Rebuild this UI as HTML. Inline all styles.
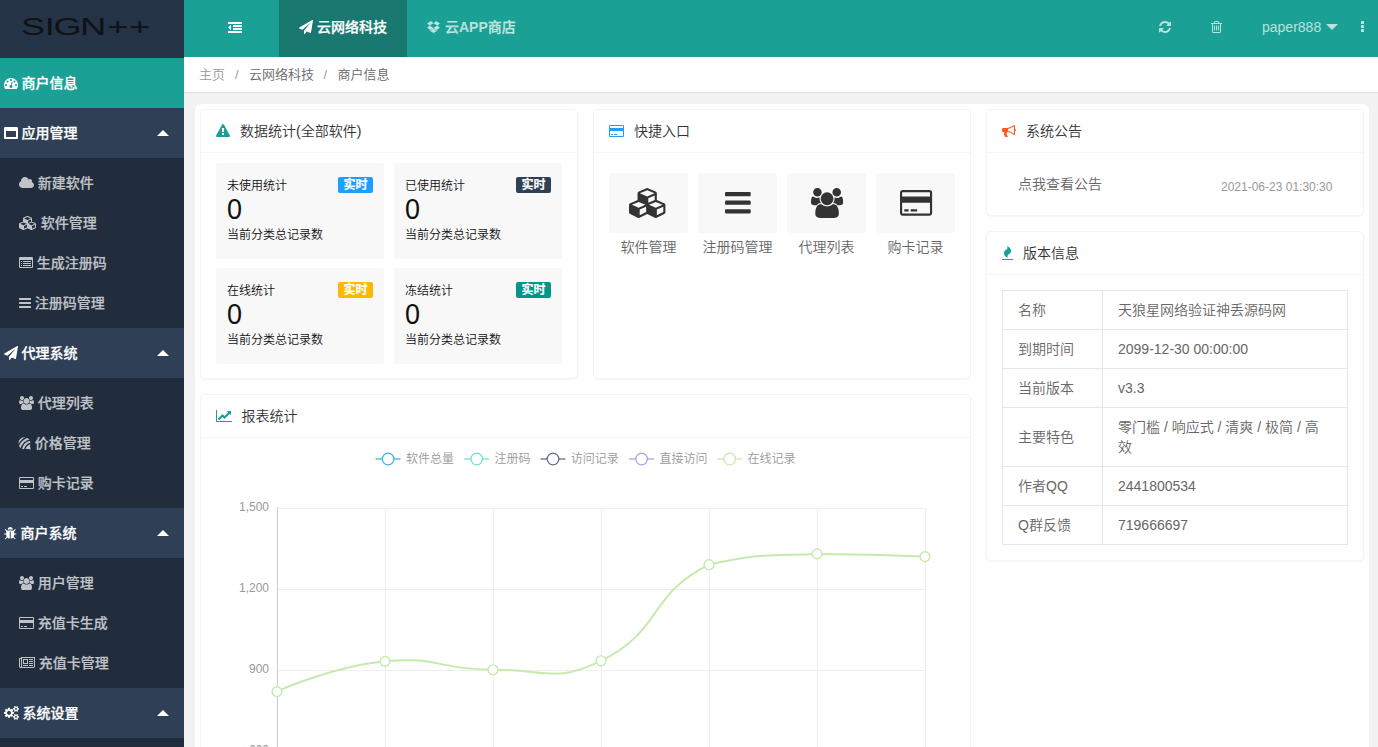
<!DOCTYPE html>
<html lang="zh-CN">
<head>
<meta charset="utf-8">
<title>云网络科技</title>
<style>
*{box-sizing:border-box;margin:0;padding:0}
html,body{width:1378px;height:747px;overflow:hidden;background:#f2f2f2;
  font-family:"Liberation Sans","Noto Sans CJK SC",sans-serif;font-size:14px;color:#333;font-weight:350}
i{font-style:normal;display:block}
b{font-weight:bold;-webkit-text-stroke:0}
svg{display:block;overflow:visible}
.abs{position:absolute;white-space:nowrap}
#page{position:relative;width:1378px;height:747px;overflow:hidden}
/* sidebar */
#side{position:absolute;left:0;top:0;width:184px;height:747px;background:#2f4056;overflow:hidden}
#logo{position:absolute;left:0;top:0;width:184px;height:57.6px;background:#243346}
#logo .lg{position:absolute;left:0;top:0;font-size:24px;color:#101114;white-space:nowrap}
#logo .lg span{position:absolute;line-height:30px;transform-origin:0 0}
.mi{position:absolute;left:0;width:184px;height:50px;background:#2f4056;color:#fff;font-weight:500;-webkit-text-stroke:.25px #fff;font-size:14px;line-height:50px}
.mi.on{background:#1aa094}
.mi .t{position:absolute;top:0;white-space:nowrap}
.mi .ar{position:absolute;left:157px;top:22px;width:0;height:0;border-left:6px solid transparent;border-right:6px solid transparent;border-bottom:6px solid #fff}
.sub{position:absolute;left:0;width:184px;background:#212d3c}
.si{position:absolute;left:0;width:184px;height:40px;line-height:40px;color:#c0c3c8;-webkit-text-stroke:.2px #c0c3c8;font-weight:500;font-size:14px}
.si .t{position:absolute;top:0;white-space:nowrap}
/* header */
#hd{position:absolute;left:184px;top:0;width:1194px;height:57px;background:#1aa094;color:#fff}
#hd .tab{position:absolute;top:0;height:57px}
#hd .tab.on{background:#197971}
#hd .ht{position:absolute;top:7px;line-height:40px;font-weight:500;-webkit-text-stroke:.25px;font-size:14px;white-space:nowrap}
#hd .hu{position:absolute;top:7px;line-height:40px;font-size:14px;white-space:nowrap}
#crumb{position:absolute;left:184px;top:57px;width:1194px;height:36px;background:#fff;border-bottom:1px solid #e2dddd;font-size:13px;line-height:36.2px;color:#666}
/* content */
#wrap{position:absolute;left:195px;top:104px;width:1174px;height:700px;background:#fff;border-radius:6px}
.card{position:absolute;background:#fff;border:1px solid #f4f4f4;border-radius:5px;box-shadow:0 1px 2px 0 rgba(0,0,0,.04)}
.card .ch{position:absolute;left:0;top:0;right:0;height:43px;border-bottom:1px solid #f6f6f6;line-height:43px;font-size:14px;color:#333;font-weight:350}
.card .ch .t{position:absolute;top:0;white-space:nowrap}
.st{position:absolute;width:168px;height:96px;background:#f8f8f8;border-radius:2px}
.st .s1{position:absolute;left:11px;top:14.3px;font-size:12px;line-height:18px;color:#111;white-space:nowrap}
.st .bd{position:absolute;left:122px;top:14px;width:35px;height:16px;border-radius:2px;color:#fff;font-size:12px;font-weight:bold;-webkit-text-stroke:.2px #fff;line-height:16px;text-align:center}
.st .s2{position:absolute;left:11.2px;top:30.2px;font-size:29px;transform-origin:0 50%;transform:scaleX(.93);line-height:32px;color:#111}
.st .s3{position:absolute;left:11px;top:63.3px;font-size:12px;line-height:18px;color:#111;white-space:nowrap}
.qb{position:absolute;width:79px;height:60px;background:#f8f8f8;border-radius:2px}
.ql{position:absolute;text-align:center;font-size:14px;line-height:20px;color:#666;white-space:nowrap}
.tb{position:absolute;border-collapse:collapse;width:346px;font-size:14px;color:#666}
.tb td{border:1px solid #e6e6e6;padding:9px 15px;line-height:20px;height:39px}
.tb .c1{width:100px}
</style>
</head>
<body>
<div id="page">
<div id="side">
<div id="logo"><svg class="abs" style="left:0;top:0" width="184" height="57" viewBox="0 0 184 57"><text transform="scale(1.5,1.02)" x="14.03 29.87 35.73 53.53 71.57 86.23" y="34.7" font-family="Liberation Sans, sans-serif" font-size="24" font-weight="400" fill="#101114">SIGN++</text></svg></div>
<div class="mi on" style="top:58px"><svg class="abs" style="left:3.60px;top:20.00px;" width="14.00" height="11.00" viewBox="0 256 1792 1408" fill="#fff"><path d="M384 1152q0-53-37.500-90.500t-90.500-37.500-90.500 37.500-37.500 90.500 37.500 90.500 90.500 37.500 90.500-37.500 37.500-90.500zm192-448q0-53-37.500-90.500t-90.500-37.500-90.500 37.500-37.500 90.500 37.500 90.500 90.500 37.500 90.500-37.500 37.500-90.500zm428 481l101-382q6-26-7.500-48.500t-38.500-29.500-48 6.500-30 39.500l-101 382q-60 5-107 43.500t-63 98.500q-20 77 20 146t117 89 146-20 89-117q16-60-6-117t-72-91zm660-33q0-53-37.500-90.500t-90.500-37.500-90.500 37.500-37.500 90.500 37.500 90.500 90.500 37.500 90.500-37.500 37.500-90.500zm-640-640q0-53-37.500-90.500t-90.500-37.500-90.500 37.500-37.500 90.500 37.500 90.500 90.500 37.500 90.500-37.500 37.500-90.500zm448 192q0-53-37.500-90.500t-90.500-37.500-90.500 37.500-37.500 90.500 37.500 90.500 90.500 37.500 90.500-37.500 37.500-90.500zm320 448q0 261-141 483-19 29-54 29h-1402q-35 0-54-29-141-221-141-483 0-182 71-348t191-286 286-191 348-71 348 71 286 191 191 286 71 348z"/></svg><span class="t" style="left:21.6px">商户信息</span></div>
<div class="mi" style="top:108px"><svg class="abs" style="left:3.60px;top:19.00px;" width="14.00" height="12.00" viewBox="0 128 1792 1536" fill="#fff"><path d="M256 1408h1280v-768h-1280v768zm1536-1120v1216q0 66-47 113t-113 47h-1472q-66 0-113-47t-47-113v-1216q0-66 47-113t113-47h1472q66 0 113 47t47 113z"/></svg><span class="t" style="left:21.6px">应用管理</span><i class="ar"></i></div>
<div class="sub" style="top:158px;height:170px"></div>
<div class="si" style="top:163px"><svg class="abs" style="left:18.70px;top:14.00px;" width="15.00" height="11.00" viewBox="64 128 1920 1408" fill="#c0c3c8"><path d="M1984 1152q0 159-112.500 271.500t-271.500 112.500h-1088q-185 0-316.500-131.500t-131.500-316.500q0-132 71-241.500t187-163.500q-2-28-2-43 0-212 150-362t362-150q158 0 286.500 88t187.500 230q70-62 166-62 106 0 181 75t75 181q0 75-41 138 129 30 213 134.500t84 239.500z"/></svg><span class="t" style="left:37.7px">新建软件</span></div>
<div class="si" style="top:203px"><svg class="abs" style="left:18.70px;top:12.98px;" width="17.00" height="14.00" viewBox="256 -3 2176 1792" fill="#c0c3c8"><path d="M896 1629l384-192v-314l-384 164v342zm-64-454l404-173-404-173-404 173zm1088 454l384-192v-314l-384 164v342zm-64-454l404-173-404-173-404 173zm-448-293l384-165v-266l-384 164v267zm-64-379l441-189-441-189-441 189zm1088 518v416q0 36-19 67t-52 47l-448 224q-25 14-57 14t-57-14l-448-224q-4-2-7-4-2 2-7 4l-448 224q-25 14-57 14t-57-14l-448-224q-33-16-52-47t-19-67v-416q0-38 21.500-70t56.500-48l434-186v-400q0-38 21.500-70t56.500-48l448-192q23-10 50-10t50 10l448 192q35 16 56.500 48t21.500 70v400l434 186q36 16 57 48t21 70z"/></svg><span class="t" style="left:40.7px">软件管理</span></div>
<div class="si" style="top:243px"><svg class="abs" style="left:18.70px;top:14.00px;" width="14.00" height="11.00" viewBox="0 128 1792 1408" fill="#c0c3c8"><path d="M384 1184v64q0 13-9.500 22.500t-22.500 9.500h-64q-13 0-22.500-9.500t-9.500-22.500v-64q0-13 9.500-22.500t22.500-9.500h64q13 0 22.500 9.500t9.500 22.500zm0-256v64q0 13-9.500 22.500t-22.500 9.500h-64q-13 0-22.500-9.500t-9.500-22.500v-64q0-13 9.500-22.500t22.500-9.500h64q13 0 22.500 9.500t9.500 22.500zm0-256v64q0 13-9.500 22.500t-22.500 9.500h-64q-13 0-22.500-9.500t-9.500-22.500v-64q0-13 9.500-22.500t22.500-9.500h64q13 0 22.500 9.500t9.500 22.500zm1152 512v64q0 13-9.500 22.500t-22.500 9.500h-960q-13 0-22.500-9.500t-9.500-22.500v-64q0-13 9.500-22.500t22.500-9.500h960q13 0 22.500 9.500t9.500 22.500zm0-256v64q0 13-9.500 22.500t-22.500 9.500h-960q-13 0-22.500-9.500t-9.500-22.500v-64q0-13 9.500-22.500t22.500-9.500h960q13 0 22.500 9.500t9.500 22.500zm0-256v64q0 13-9.500 22.500t-22.500 9.500h-960q-13 0-22.500-9.500t-9.500-22.500v-64q0-13 9.500-22.500t22.500-9.500h960q13 0 22.500 9.500t9.500 22.500zm128 704v-832q0-13-9.500-22.500t-22.500-9.500h-1472q-13 0-22.500 9.500t-9.500 22.500v832q0 13 9.500 22.500t22.500 9.500h1472q13 0 22.500-9.500t9.500-22.500zm128-1088v1088q0 66-47 113t-113 47h-1472q-66 0-113-47t-47-113v-1088q0-66 47-113t113-47h1472q66 0 113 47t47 113z"/></svg><span class="t" style="left:36.7px">生成注册码</span></div>
<div class="si" style="top:283px"><svg class="abs" style="left:18.70px;top:15.00px;" width="12.00" height="10.00" viewBox="128 256 1536 1280" fill="#c0c3c8"><path d="M1664 1344v128q0 26-19 45t-45 19h-1408q-26 0-45-19t-19-45v-128q0-26 19-45t45-19h1408q26 0 45 19t19 45zm0-512v128q0 26-19 45t-45 19h-1408q-26 0-45-19t-19-45v-128q0-26 19-45t45-19h1408q26 0 45 19t19 45zm0-512v128q0 26-19 45t-45 19h-1408q-26 0-45-19t-19-45v-128q0-26 19-45t45-19h1408q26 0 45 19t19 45z"/></svg><span class="t" style="left:34.7px">注册码管理</span></div>
<div class="mi" style="top:328px"><svg class="abs" style="left:3.60px;top:18.00px;" width="14.00" height="14.00" viewBox="-0 0 1792 1792" fill="#fff"><path d="M1764 11q33 24 27 64l-256 1536q-5 29-32 45-14 8-31 8-11 0-24-5l-453-185-242 295q-18 23-49 23-13 0-22-4-19-7-30.500-23.500t-11.500-36.500v-349l864-1059-1069 925-395-162q-37-14-40-55-2-40 32-59l1664-960q15-9 32-9 20 0 36 11z"/></svg><span class="t" style="left:21.6px">代理系统</span><i class="ar"></i></div>
<div class="sub" style="top:378px;height:130px"></div>
<div class="si" style="top:383px"><svg class="abs" style="left:18.70px;top:13.00px;" width="15.00" height="14.00" viewBox="0 0 1920 1792" fill="#c0c3c8"><path d="M593 896q-162 5-265 128h-134q-82 0-138-40.500t-56-118.500q0-353 124-353 6 0 43.500 21t97.500 42.500 119 21.500q67 0 133-23-5 37-5 66 0 139 81 256zm1071 637q0 120-73 189.500t-194 69.500h-874q-121 0-194-69.500t-73-189.500q0-53 3.500-103.500t14-109 26.500-108.500 43-97.500 62-81 85.500-53.500 111.500-20q10 0 43 21.500t73 48 107 48 135 21.500 135-21.500 107-48 73-48 43-21.500q61 0 111.500 20t85.500 53.500 62 81 43 97.500 26.500 108.500 14 109 3.500 103.500zm-1024-1277q0 106-75 181t-181 75-181-75-75-181 75-181 181-75 181 75 75 181zm704 384q0 159-112.500 271.500t-271.500 112.500-271.500-112.500-112.500-271.500 112.500-271.500 271.500-112.500 271.500 112.500 112.500 271.500zm576 225q0 78-56 118.500t-138 40.500h-134q-103-123-265-128 81-117 81-256 0-29-5-66 66 23 133 23 59 0 119-21.500t97.500-42.500 43.500-21q124 0 124 353zm-128-609q0 106-75 181t-181 75-181-75-75-181 75-181 181-75 181 75 75 181z"/></svg><span class="t" style="left:37.7px">代理列表</span></div>
<div class="si" style="top:423px"><svg class="abs" style="left:18.40px;top:13.90px;color:#c0c3c8" width="13" height="12.4" viewBox="0 0 12 12" fill="#c0c3c8"><defs><clipPath id="fbc"><path d="M6 0.2a5.9 5.9 0 0 1 5.9 5.9c0 1.5-.55 2.9-1.5 3.9L12 12l-3.6-.55A5.9 5.9 0 1 1 6 .2z"/></clipPath></defs><g clip-path="url(#fbc)" stroke-width="2.05" fill="none" stroke="currentColor"><circle cx="14" cy="14" r="16.6"/><circle cx="14" cy="14" r="13.2"/><circle cx="14" cy="14" r="9.8"/><circle cx="14" cy="14" r="6.4"/></g><path d="M8.3 11.3L12 12 11.2 8.2 9.4 9.2z" fill="currentColor"/></svg><span class="t" style="left:34.7px">价格管理</span></div>
<div class="si" style="top:463px"><svg class="abs" style="left:18.70px;top:14.00px;" width="15.00" height="12.00" viewBox="0 128 1920 1536" fill="#c0c3c8"><path d="M1760 128q66 0 113 47t47 113v1216q0 66-47 113t-113 47h-1600q-66 0-113-47t-47-113v-1216q0-66 47-113t113-47h1600zm-1600 128q-13 0-22.500 9.500t-9.500 22.500v224h1664v-224q0-13-9.500-22.500t-22.500-9.500h-1600zm1600 1280q13 0 22.500-9.500t9.500-22.500v-608h-1664v608q0 13 9.500 22.500t22.500 9.500h1600zm-1504-128v-128h256v128h-256zm384 0v-128h384v128h-384z"/></svg><span class="t" style="left:37.7px">购卡记录</span></div>
<div class="mi" style="top:508px"><svg class="abs" style="left:3.85px;top:18.50px;" width="12.50" height="12.25" viewBox="96 64 1600 1568" fill="#fff"><path d="M1696 960q0 26-19 45t-45 19h-224q0 171-67 290l208 209q19 19 19 45t-19 45q-18 19-45 19t-45-19l-198-197q-5 5-15 13t-42 28.500-65 36.500-82 29-97 13v-896h-128v896q-51 0-101.500-13.500t-87-33-66-39-43.500-32.500l-15-14-183 207q-20 21-48 21-24 0-43-16-19-18-20.500-44.500t15.500-46.500l202-227q-58-114-58-274h-224q-26 0-45-19t-19-45 19-45 45-19h224v-294l-173-173q-19-19-19-45t19-45 45-19 45 19l173 173h844l173-173q19-19 45-19t45 19 19 45-19 45l-173 173v294h224q26 0 45 19t19 45zm-480-576h-640q0-133 93.500-226.500t226.500-93.500 226.500 93.500 93.500 226.500z"/></svg><span class="t" style="left:20.6px">商户系统</span><i class="ar"></i></div>
<div class="sub" style="top:558px;height:130px"></div>
<div class="si" style="top:563px"><svg class="abs" style="left:18.70px;top:13.00px;" width="15.00" height="14.00" viewBox="0 0 1920 1792" fill="#c0c3c8"><path d="M593 896q-162 5-265 128h-134q-82 0-138-40.500t-56-118.500q0-353 124-353 6 0 43.500 21t97.500 42.500 119 21.500q67 0 133-23-5 37-5 66 0 139 81 256zm1071 637q0 120-73 189.500t-194 69.500h-874q-121 0-194-69.500t-73-189.500q0-53 3.500-103.500t14-109 26.500-108.500 43-97.500 62-81 85.500-53.500 111.500-20q10 0 43 21.500t73 48 107 48 135 21.500 135-21.500 107-48 73-48 43-21.500q61 0 111.500 20t85.500 53.500 62 81 43 97.500 26.500 108.500 14 109 3.500 103.500zm-1024-1277q0 106-75 181t-181 75-181-75-75-181 75-181 181-75 181 75 75 181zm704 384q0 159-112.500 271.500t-271.500 112.500-271.500-112.500-112.500-271.500 112.500-271.500 271.500-112.500 271.500 112.500 112.500 271.500zm576 225q0 78-56 118.500t-138 40.500h-134q-103-123-265-128 81-117 81-256 0-29-5-66 66 23 133 23 59 0 119-21.500t97.500-42.500 43.500-21q124 0 124 353zm-128-609q0 106-75 181t-181 75-181-75-75-181 75-181 181-75 181 75 75 181z"/></svg><span class="t" style="left:37.7px">用户管理</span></div>
<div class="si" style="top:603px"><svg class="abs" style="left:18.70px;top:14.00px;" width="15.00" height="12.00" viewBox="0 128 1920 1536" fill="#c0c3c8"><path d="M1760 128q66 0 113 47t47 113v1216q0 66-47 113t-113 47h-1600q-66 0-113-47t-47-113v-1216q0-66 47-113t113-47h1600zm-1600 128q-13 0-22.500 9.500t-9.500 22.500v224h1664v-224q0-13-9.500-22.500t-22.500-9.500h-1600zm1600 1280q13 0 22.500-9.500t9.500-22.500v-608h-1664v608q0 13 9.500 22.500t22.500 9.500h1600zm-1504-128v-128h256v128h-256zm384 0v-128h384v128h-384z"/></svg><span class="t" style="left:37.7px">充值卡生成</span></div>
<div class="si" style="top:643px"><svg class="abs" style="left:18.70px;top:14.00px;" width="16.00" height="11.00" viewBox="0 128 2048 1408" fill="#c0c3c8"><path d="M1024 512h-384v384h384v-384zm128 640v128h-640v-128h640zm0-768v640h-640v-640h640zm640 768v128h-512v-128h512zm0-256v128h-512v-128h512zm0-256v128h-512v-128h512zm0-256v128h-512v-128h512zm-1536 960v-960h-128v960q0 26 19 45t45 19 45-19 19-45zm1664 0v-1088h-1536v1088q0 33-11 64h1483q26 0 45-19t19-45zm128-1216v1216q0 80-56 136t-136 56h-1664q-80 0-136-56t-56-136v-1088h256v-128h1792z"/></svg><span class="t" style="left:38.7px">充值卡管理</span></div>
<div class="mi" style="top:688px"><svg class="abs" style="left:3.60px;top:18.12px;" width="15.00" height="13.76" viewBox="0 16 1920 1761" fill="#fff"><path d="M896 896q0-106-75-181t-181-75-181 75-75 181 75 181 181 75 181-75 75-181zm768 512q0-52-38-90t-90-38-90 38-38 90q0 53 37.500 90.500t90.500 37.500 90.500-37.500 37.500-90.500zm0-1024q0-52-38-90t-90-38-90 38-38 90q0 53 37.500 90.500t90.500 37.500 90.500-37.500 37.500-90.500zm-384 421v185q0 10-7 19.500t-16 10.500l-155 24q-11 35-32 76 34 48 90 115 7 11 7 20 0 12-7 19-23 30-82.500 89.500t-78.500 59.500q-11 0-21-7l-115-90q-37 19-77 31-11 108-23 155-7 24-30 24h-186q-11 0-20-7.500t-10-17.500l-23-153q-34-10-75-31l-118 89q-7 7-20 7-11 0-21-8-144-133-144-160 0-9 7-19 10-14 41-53t47-61q-23-44-35-82l-152-24q-10-1-17-9.500t-7-19.500v-185q0-10 7-19.500t16-10.500l155-24q11-35 32-76-34-48-90-115-7-11-7-20 0-12 7-20 22-30 82-89t79-59q11 0 21 7l115 90q34-18 77-32 11-108 23-154 7-24 30-24h186q11 0 20 7.500t10 17.500l23 153q34 10 75 31l118-89q8-7 20-7 11 0 21 8 144 133 144 160 0 8-7 19-12 16-42 54t-45 60q23 48 34 82l152 23q10 2 17 10.500t7 19.500zm640 533v140q0 16-149 31-12 27-30 52 51 113 51 138 0 4-4 7-122 71-124 71-8 0-46-47t-52-68q-20 2-30 2t-30-2q-14 21-52 68t-46 47q-2 0-124-71-4-3-4-7 0-25 51-138-18-25-30-52-149-15-149-31v-140q0-16 149-31 13-29 30-52-51-113-51-138 0-4 4-7 4-2 35-20t59-34 30-16q8 0 46 46.500t52 67.500q20-2 30-2t30 2q51-71 92-112l6-2q4 0 124 70 4 3 4 7 0 25-51 138 17 23 30 52 149 15 149 31zm0-1024v140q0 16-149 31-12 27-30 52 51 113 51 138 0 4-4 7-122 71-124 71-8 0-46-47t-52-68q-20 2-30 2t-30-2q-14 21-52 68t-46 47q-2 0-124-71-4-3-4-7 0-25 51-138-18-25-30-52-149-15-149-31v-140q0-16 149-31 13-29 30-52-51-113-51-138 0-4 4-7 4-2 35-20t59-34 30-16q8 0 46 46.500t52 67.500q20-2 30-2t30 2q51-71 92-112l6-2q4 0 124 70 4 3 4 7 0 25-51 138 17 23 30 52 149 15 149 31z"/></svg><span class="t" style="left:22.6px">系统设置</span><i class="ar"></i></div>
<div class="sub" style="top:738px;height:60px"></div>
</div>
<div id="hd">
<svg class="abs" style="left:43.80px;top:21.90px;" width="14.00" height="11.00" viewBox="0 128 1792 1408" fill="#fff"><path d="M384 544v576q0 13-9.500 22.500t-22.500 9.500q-14 0-23-9l-288-288q-9-9-9-23t9-23l288-288q9-9 23-9 13 0 22.500 9.500t9.500 22.500zm1408 768v192q0 13-9.500 22.500t-22.500 9.500h-1728q-13 0-22.500-9.500t-9.500-22.500v-192q0-13 9.500-22.500t22.500-9.500h1728q13 0 22.500 9.500t9.500 22.500zm0-384v192q0 13-9.500 22.500t-22.500 9.500h-1088q-13 0-22.500-9.500t-9.500-22.500v-192q0-13 9.500-22.500t22.500-9.500h1088q13 0 22.500 9.500t9.500 22.500zm0-384v192q0 13-9.500 22.500t-22.500 9.500h-1088q-13 0-22.500-9.500t-9.500-22.500v-192q0-13 9.500-22.500t22.500-9.500h1088q13 0 22.500 9.500t9.500 22.500zm0-384v192q0 13-9.500 22.500t-22.500 9.500h-1728q-13 0-22.500-9.500t-9.500-22.500v-192q0-13 9.500-22.500t22.500-9.500h1728q13 0 22.500 9.500t9.500 22.500z"/></svg>
<div class="tab on" style="left:95px;width:128px"></div>
<svg class="abs" style="left:114.80px;top:19.80px;" width="14.00" height="14.00" viewBox="-0 0 1792 1792" fill="#fff"><path d="M1764 11q33 24 27 64l-256 1536q-5 29-32 45-14 8-31 8-11 0-24-5l-453-185-242 295q-18 23-49 23-13 0-22-4-19-7-30.500-23.500t-11.500-36.500v-349l864-1059-1069 925-395-162q-37-14-40-55-2-40 32-59l1664-960q15-9 32-9 20 0 36 11z"/></svg>
<span class="ht" style="left:133px;color:#fff">云网络科技</span>
<svg class="abs" style="left:243.30px;top:21.12px;" width="13.00" height="12.08" viewBox="64 118 1664 1546" fill="rgba(255,255,255,.7)"><path d="M402 707l494 305-342 285-490-319zm986 555v108l-490 293v1l-1-1-1 1v-1l-489-293v-108l147 96 342-284v-2l1 1 1-1v2l343 284zm-834-1144l342 285-494 304-338-270zm836 589l338 271-489 319-343-285zm-151-589l489 319-338 270-494-304z"/></svg>
<span class="ht" style="left:261px;color:rgba(255,255,255,.7)">云<b>APP</b>商店</span>
<svg class="abs" style="left:974.60px;top:21.00px;" width="12.00" height="12.00" viewBox="128 128 1536 1536" fill="rgba(255,255,255,.7)"><path d="M1639 1056q0 5-1 7-64 268-268 434.500t-478 166.500q-146 0-282.500-55t-243.500-157l-129 129q-19 19-45 19t-45-19-19-45v-448q0-26 19-45t45-19h448q26 0 45 19t19 45-19 45l-137 137q71 66 161 102t187 36q134 0 250-65t186-179q11-17 53-117 8-23 30-23h192q13 0 22.500 9.500t9.500 22.500zm25-800v448q0 26-19 45t-45 19h-448q-26 0-45-19t-19-45 19-45l138-138q-148-137-349-137-134 0-250 65t-186 179q-11 17-53 117-8 23-30 23h-199q-13 0-22.500-9.500t-9.500-22.500v-7q65-268 270-434.500t480-166.500q146 0 284 55.500t245 156.500l130-129q19-19 45-19t45 19 19 45z"/></svg>
<svg class="abs" style="left:1027.00px;top:21.00px;" width="11.00" height="12.00" viewBox="192 128 1408 1536" fill="rgba(255,255,255,.7)"><path d="M704 736v576q0 14-9 23t-23 9h-64q-14 0-23-9t-9-23v-576q0-14 9-23t23-9h64q14 0 23 9t9 23zm256 0v576q0 14-9 23t-23 9h-64q-14 0-23-9t-9-23v-576q0-14 9-23t23-9h64q14 0 23 9t9 23zm256 0v576q0 14-9 23t-23 9h-64q-14 0-23-9t-9-23v-576q0-14 9-23t23-9h64q14 0 23 9t9 23zm128 724v-948h-896v948q0 22 7 40.500t14.500 27 10.500 8.500h832q3 0 10.500-8.500t14.500-27 7-40.500zm-672-1076h448l-48-117q-7-9-17-11h-317q-10 2-17 11zm928 32v64q0 14-9 23t-23 9h-96v948q0 83-47 143.500t-113 60.500h-832q-66 0-113-58.500t-47-141.500v-952h-96q-14 0-23-9t-9-23v-64q0-14 9-23t23-9h309l70-167q15-37 54-63t79-26h320q40 0 79 26t54 63l70 167h309q14 0 23 9t9 23z"/></svg>
<span class="hu" style="left:1078px;color:rgba(255,255,255,.7)">paper888</span>
<i class="abs" style="left:1142px;top:24px;width:0;height:0;border-left:6px solid transparent;border-right:6px solid transparent;border-top:6px solid rgba(255,255,255,.7)"></i>
<i class="abs" style="left:1176.8px;top:21.3px;width:3.4px;height:3px;background:rgba(255,255,255,.7);border-radius:.5px"></i>
<i class="abs" style="left:1176.8px;top:25.2px;width:3.4px;height:3px;background:rgba(255,255,255,.7);border-radius:.5px"></i>
<i class="abs" style="left:1176.8px;top:29.1px;width:3.4px;height:3px;background:rgba(255,255,255,.7);border-radius:.5px"></i>
</div>
<div id="crumb"><span class="abs" style="left:15px;color:#999">主页</span><span class="abs" style="left:51px;color:#999">/</span><span class="abs" style="left:65px">云网络科技</span><span class="abs" style="left:139.5px;color:#999">/</span><span class="abs" style="left:153.5px">商户信息</span></div>
<div id="wrap"></div>
<div class="card" style="left:200px;top:109px;width:378px;height:270px">
<div class="ch"><svg class="abs" style="left:15.00px;top:13.80px;" width="14.02" height="13.00" viewBox="-1 0 1794 1664" fill="#1aa094"><path d="M1024 1375v-190q0-14-9.500-23.500t-22.500-9.500h-192q-13 0-22.500 9.500t-9.500 23.500v190q0 14 9.500 23.500t22.500 9.500h192q13 0 22.500-9.500t9.500-23.500zm-2-374l18-459q0-12-10-19-13-11-24-11h-220q-11 0-24 11-10 7-10 21l17 457q0 10 10 16.500t24 6.500h185q14 0 23.500-6.500t10.500-16.500zm-14-934l768 1408q35 63-2 126-17 29-46.500 46t-63.500 17h-1536q-34 0-63.500-17t-46.500-46q-37-63-2-126l768-1408q17-31 47-49t65-18 65 18 47 49z"/></svg><span class="t" style="left:39px">数据统计(全部软件)</span></div>
<div class="st" style="left:15px;top:53px"><span class="s1">未使用统计</span><span class="bd" style="background:#1e9fff">实时</span><span class="s2">0</span><span class="s3">当前分类总记录数</span></div>
<div class="st" style="left:193px;top:53px"><span class="s1">已使用统计</span><span class="bd" style="background:#2f4056">实时</span><span class="s2">0</span><span class="s3">当前分类总记录数</span></div>
<div class="st" style="left:15px;top:158px"><span class="s1">在线统计</span><span class="bd" style="background:#ffb800">实时</span><span class="s2">0</span><span class="s3">当前分类总记录数</span></div>
<div class="st" style="left:193px;top:158px"><span class="s1">冻结统计</span><span class="bd" style="background:#009688">实时</span><span class="s2">0</span><span class="s3">当前分类总记录数</span></div>
</div>
<div class="card" style="left:593px;top:109px;width:378px;height:270px">
<div class="ch"><svg class="abs" style="left:15.00px;top:15.00px;" width="15.00" height="12.00" viewBox="0 128 1920 1536" fill="#1e9fff"><path d="M1760 128q66 0 113 47t47 113v1216q0 66-47 113t-113 47h-1600q-66 0-113-47t-47-113v-1216q0-66 47-113t113-47h1600zm-1600 128q-13 0-22.500 9.500t-9.500 22.500v224h1664v-224q0-13-9.500-22.500t-22.500-9.500h-1600zm1600 1280q13 0 22.500-9.500t9.500-22.500v-608h-1664v608q0 13 9.500 22.500t22.500 9.500h1600zm-1504-128v-128h256v128h-256zm384 0v-128h384v128h-384z"/></svg><span class="t" style="left:40px">快捷入口</span></div>
<div class="qb" style="left:15px;top:63px"></div><svg class="abs" style="left:35.49px;top:78.15px;" width="36.43" height="30.00" viewBox="256 -3 2176 1792" fill="#333"><path d="M896 1629l384-192v-314l-384 164v342zm-64-454l404-173-404-173-404 173zm1088 454l384-192v-314l-384 164v342zm-64-454l404-173-404-173-404 173zm-448-293l384-165v-266l-384 164v267zm-64-379l441-189-441-189-441 189zm1088 518v416q0 36-19 67t-52 47l-448 224q-25 14-57 14t-57-14l-448-224q-4-2-7-4-2 2-7 4l-448 224q-25 14-57 14t-57-14l-448-224q-33-16-52-47t-19-67v-416q0-38 21.500-70t56.500-48l434-186v-400q0-38 21.500-70t56.500-48l448-192q23-10 50-10t50 10l448 192q35 16 56.500 48t21.500 70v400l434 186q36 16 57 48t21 70z"/></svg><div class="ql" style="left:5px;width:99px;top:127px">软件管理</div>
<div class="qb" style="left:104px;top:63px"></div><svg class="abs" style="left:131.04px;top:82.49px;" width="25.71" height="21.43" viewBox="128 256 1536 1280" fill="#333"><path d="M1664 1344v128q0 26-19 45t-45 19h-1408q-26 0-45-19t-19-45v-128q0-26 19-45t45-19h1408q26 0 45 19t19 45zm0-512v128q0 26-19 45t-45 19h-1408q-26 0-45-19t-19-45v-128q0-26 19-45t45-19h1408q26 0 45 19t19 45zm0-512v128q0 26-19 45t-45 19h-1408q-26 0-45-19t-19-45v-128q0-26 19-45t45-19h1408q26 0 45 19t19 45z"/></svg><div class="ql" style="left:94px;width:99px;top:127px">注册码管理</div>
<div class="qb" style="left:193px;top:63px"></div><svg class="abs" style="left:216.83px;top:78.20px;" width="32.14" height="30.00" viewBox="0 0 1920 1792" fill="#333"><path d="M593 896q-162 5-265 128h-134q-82 0-138-40.500t-56-118.500q0-353 124-353 6 0 43.500 21t97.500 42.500 119 21.500q67 0 133-23-5 37-5 66 0 139 81 256zm1071 637q0 120-73 189.500t-194 69.500h-874q-121 0-194-69.500t-73-189.500q0-53 3.500-103.500t14-109 26.500-108.500 43-97.500 62-81 85.500-53.500 111.500-20q10 0 43 21.500t73 48 107 48 135 21.500 135-21.500 107-48 73-48 43-21.500q61 0 111.500 20t85.500 53.500 62 81 43 97.500 26.500 108.500 14 109 3.500 103.500zm-1024-1277q0 106-75 181t-181 75-181-75-75-181 75-181 181-75 181 75 75 181zm704 384q0 159-112.500 271.500t-271.500 112.500-271.500-112.500-112.500-271.500 112.500-271.500 271.500-112.500 271.500 112.500 112.500 271.500zm576 225q0 78-56 118.500t-138 40.500h-134q-103-123-265-128 81-117 81-256 0-29-5-66 66 23 133 23 59 0 119-21.500t97.500-42.500 43.500-21q124 0 124 353zm-128-609q0 106-75 181t-181 75-181-75-75-181 75-181 181-75 181 75 75 181z"/></svg><div class="ql" style="left:183px;width:99px;top:127px">代理列表</div>
<div class="qb" style="left:282px;top:63px"></div><svg class="abs" style="left:305.83px;top:80.34px;" width="32.14" height="25.71" viewBox="0 128 1920 1536" fill="#333"><path d="M1760 128q66 0 113 47t47 113v1216q0 66-47 113t-113 47h-1600q-66 0-113-47t-47-113v-1216q0-66 47-113t113-47h1600zm-1600 128q-13 0-22.500 9.500t-9.500 22.500v224h1664v-224q0-13-9.500-22.500t-22.500-9.500h-1600zm1600 1280q13 0 22.500-9.500t9.500-22.500v-608h-1664v608q0 13 9.500 22.500t22.500 9.500h1600zm-1504-128v-128h256v128h-256zm384 0v-128h384v128h-384z"/></svg><div class="ql" style="left:272px;width:99px;top:127px">购卡记录</div>
</div>
<div class="card" style="left:986px;top:109px;width:378px;height:107px">
<div class="ch"><svg class="abs" style="left:15.00px;top:15.00px;" width="14.00" height="12.01" viewBox="0 128 1792 1537" fill="#ff5722"><path d="M1664 640q53 0 90.500 37.500t37.500 90.500-37.500 90.500-90.500 37.500v384q0 52-38 90t-90 38q-417-347-812-380-58 19-91 66t-31 100.500 40 92.500q-20 33-23 65.500t6 58 33.500 55 48 50 61.500 50.500q-29 58-111.500 83t-168.500 11.500-132-55.500q-7-23-29.500-87.500t-32-94.500-23-89-15-101 3.500-98.500 22-110.500h-122q-66 0-113-47t-47-113v-192q0-66 47-113t113-47h480q435 0 896-384 52 0 90 38t38 90v384zm-128 604v-954q-394 302-768 343v270q377 42 768 341z"/></svg><span class="t" style="left:39px">系统公告</span></div>
<span class="abs" style="left:31px;top:63.8px;line-height:20px;color:#666">点我查看公告</span>
<span class="abs" style="left:234px;top:66.5px;line-height:20px;font-size:12px;color:#999">2021-06-23 01:30:30</span>
</div>
<div class="card" style="left:986px;top:231px;width:378px;height:330px">
<div class="ch"><svg class="abs" style="left:15.30px;top:14.00px;" width="11.00" height="14.00" viewBox="192 0 1408 1792" fill="#1aa094"><path d="M1600 1696v64q0 13-9.500 22.500t-22.500 9.500h-1344q-13 0-22.500-9.500t-9.500-22.500v-64q0-13 9.500-22.500t22.500-9.500h1344q13 0 22.500 9.500t9.500 22.500zm-256-1056q0 78-24.500 144t-64 112.500-87.500 88-96 77.500-87.500 72-64 81.500-24.500 96.500q0 96 67 224l-4-1 1 1q-90-41-160-83t-138.500-100-113.500-122.500-72.500-150.500-27.500-184q0-78 24.500-144t64-112.500 87.500-88 96-77.500 87.500-72 64-81.500 24.500-96.500q0-94-66-224l3 1-1-1q90 41 160 83t138.500 100 113.500 122.500 72.500 150.500 27.500 184z"/></svg><span class="t" style="left:36px">版本信息</span></div>
<table class="tb" style="left:15px;top:58px">
<tr><td class="c1">名称</td><td class="c2">天狼星网络验证神丢源码网</td></tr>
<tr><td class="c1">到期时间</td><td class="c2">2099-12-30 00:00:00</td></tr>
<tr><td class="c1">当前版本</td><td class="c2">v3.3</td></tr>
<tr><td class="c1">主要特色</td><td class="c2">零门槛 / 响应式 / 清爽 / 极简 / 高效</td></tr>
<tr><td class="c1">作者QQ</td><td class="c2">2441800534</td></tr>
<tr><td class="c1">Q群反馈</td><td class="c2">719666697</td></tr>
</table></div>
<div class="card" style="left:200px;top:394px;width:771px;height:400px">
<div class="ch"><svg class="abs" style="left:15.30px;top:15.00px;" width="16.00" height="12.00" viewBox="0 128 2048 1536" fill="#1aa094"><path d="M2048 1536v128h-2048v-1536h128v1408h1920zm-128-1248v435q0 21-19.500 29.500t-35.500-7.500l-121-121-633 633q-10 10-23 10t-23-10l-233-233-416 416-192-192 585-585q10-10 23-10t23 10l233 233 464-464-121-121q-16-16-7.500-35.500t29.500-19.500h435q14 0 23 9t9 23z"/></svg><span class="t" style="left:40.6px">报表统计</span></div>
</div>
<svg class="abs" style="left:0;top:0" width="1378" height="747" viewBox="0 0 1378 747" font-family="Liberation Sans, Noto Sans CJK SC, sans-serif" font-size="12"><line x1="277.0" x2="925.0" y1="508.5" y2="508.5" stroke="#eee" stroke-width="1"/><line x1="277.0" x2="925.0" y1="589.5" y2="589.5" stroke="#eee" stroke-width="1"/><line x1="277.0" x2="925.0" y1="670.5" y2="670.5" stroke="#eee" stroke-width="1"/><line x1="277.0" x2="925.0" y1="751.5" y2="751.5" stroke="#eee" stroke-width="1"/><line x1="385.5" x2="385.5" y1="508.0" y2="747" stroke="#eee" stroke-width="1"/><line x1="493.5" x2="493.5" y1="508.0" y2="747" stroke="#eee" stroke-width="1"/><line x1="601.5" x2="601.5" y1="508.0" y2="747" stroke="#eee" stroke-width="1"/><line x1="709.5" x2="709.5" y1="508.0" y2="747" stroke="#eee" stroke-width="1"/><line x1="817.5" x2="817.5" y1="508.0" y2="747" stroke="#eee" stroke-width="1"/><line x1="925.5" x2="925.5" y1="508.0" y2="747" stroke="#eee" stroke-width="1"/><line x1="277.5" x2="277.5" y1="507.3" y2="747" stroke="#ccc" stroke-width="1"/><text x="269.0" y="511.0" text-anchor="end" fill="#999">1,500</text><text x="269.0" y="592.0" text-anchor="end" fill="#999">1,200</text><text x="269.0" y="673.0" text-anchor="end" fill="#999">900</text><text x="269.0" y="754.0" text-anchor="end" fill="#999">600</text><line x1="375.6" x2="400.6" y1="459" y2="459" stroke="#3fb1e3" stroke-width="1.3"/><circle cx="388.1" cy="459" r="5.8" fill="#fff" stroke="#3fb1e3" stroke-width="1.3"/><text x="405.9" y="462.6" fill="#999">软件总量</text><line x1="464.2" x2="489.2" y1="459" y2="459" stroke="#6be6c1" stroke-width="1.3"/><circle cx="476.7" cy="459" r="5.8" fill="#fff" stroke="#6be6c1" stroke-width="1.3"/><text x="494.5" y="462.6" fill="#999">注册码</text><line x1="540.5" x2="565.5" y1="459" y2="459" stroke="#626c91" stroke-width="1.3"/><circle cx="553.0" cy="459" r="5.8" fill="#fff" stroke="#626c91" stroke-width="1.3"/><text x="570.8" y="462.6" fill="#999">访问记录</text><line x1="629.1" x2="654.1" y1="459" y2="459" stroke="#a0a7e6" stroke-width="1.3"/><circle cx="641.6" cy="459" r="5.8" fill="#fff" stroke="#a0a7e6" stroke-width="1.3"/><text x="659.4" y="462.6" fill="#999">直接访问</text><line x1="717.2" x2="742.2" y1="459" y2="459" stroke="#c4ebad" stroke-width="1.3"/><circle cx="729.7" cy="459" r="5.8" fill="#fff" stroke="#c4ebad" stroke-width="1.3"/><text x="747.5" y="462.6" fill="#999">在线记录</text><path d="M277.00 691.60C277.00 691.60 330.06 666.92 385.00 661.36C438.06 655.99 439.01 669.86 493.00 669.73C547.01 669.59 554.73 683.32 601.00 660.82C662.73 630.80 647.31 595.24 709.00 564.70C755.31 553.90 762.87 555.93 817.00 553.90C870.87 553.90 925.00 556.60 925.00 556.60" fill="none" stroke="#c4ebad" stroke-width="2" stroke-linejoin="bevel"/><circle cx="277.00" cy="691.60" r="4.9" fill="#fff" stroke="#c4ebad" stroke-width="1.4"/><circle cx="385.00" cy="661.36" r="4.9" fill="#fff" stroke="#c4ebad" stroke-width="1.4"/><circle cx="493.00" cy="669.73" r="4.9" fill="#fff" stroke="#c4ebad" stroke-width="1.4"/><circle cx="601.00" cy="660.82" r="4.9" fill="#fff" stroke="#c4ebad" stroke-width="1.4"/><circle cx="709.00" cy="564.70" r="4.9" fill="#fff" stroke="#c4ebad" stroke-width="1.4"/><circle cx="817.00" cy="553.90" r="4.9" fill="#fff" stroke="#c4ebad" stroke-width="1.4"/><circle cx="925.00" cy="556.60" r="4.9" fill="#fff" stroke="#c4ebad" stroke-width="1.4"/></svg>
</div>
</body>
</html>
